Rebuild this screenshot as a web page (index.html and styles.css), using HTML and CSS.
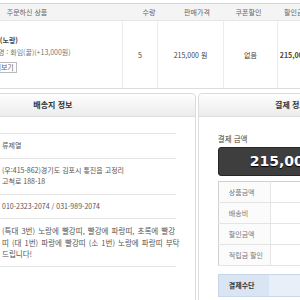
FILE: index.html
```html
<!DOCTYPE html>
<html lang="ko">
<head>
    <meta charset="UTF-8">
    <meta name="viewport" content="width=device-width, initial-scale=1.0">
    <title>주문 확인</title>
    <link rel="stylesheet" href="styles.css">
</head>
<body>
    <div class="page">
        <div class="order-table">
            <div class="order-head">
                <span></span>
                <span>주문하신 상품</span>
                <span>수량</span>
                <span>판매가격</span>
                <span>쿠폰할인</span>
                <span>할인금액</span>
                <span></span>
            </div>
            <div class="order-row">
                <div class="cell product">
                    <p class="prod-name">사탕 (노랑)</p>
                    <p class="prod-opt">옵션명 : 화임(꿀)(+13,000원)</p>
                    <button class="btn-small">상세보기</button>
                </div>
                <div class="cell">5</div>
                <div class="cell">215,000 원</div>
                <div class="cell">없음</div>
                <div class="cell strong">215,000 원</div>
                <div class="cell"></div>
            </div>
        </div>

        <div class="panels">
            <!-- 배송지 정보 -->
            <section class="panel ship">
                <h2 class="panel-title">배송지 정보</h2>
                <div class="panel-body">
                    <table class="info">
                        <tr><th>받는분</th><td>류제열</td></tr>
                        <tr><th>주소</th><td>(우:415-862)경기도 김포시 통진읍 고정리<br>고척로 188-18</td></tr>
                        <tr><th>연락처</th><td>010-2323-2074 / 031-989-2074</td></tr>
                        <tr><th>요청사항</th><td class="memo">(특대 3번) 노랑에 빨강띠, 빨강에 파랑띠, 초록에 빨강<br>띠 (대 1번) 파랑에 빨강띠 (소 1번) 노랑에 파랑띠 부탁<br>드립니다!</td></tr>
                    </table>
                </div>
            </section>

            <!-- 결제 정보 -->
            <section class="panel pay">
                <h2 class="panel-title">결제 정보</h2>
                <div class="panel-body">
                    <p class="pay-label">결제 금액</p>
                    <div class="pay-total">215,000원</div>
                    <table class="pay-table">
                        <tr><th>상품금액</th><td></td></tr>
                        <tr><th>배송비</th><td></td></tr>
                        <tr><th>할인금액</th><td></td></tr>
                        <tr><th>적립금 할인</th><td></td></tr>
                    </table>
                    <div class="pay-method">
                        <span class="pay-method-label">결제수단</span>
                        <span class="pay-method-value"></span>
                    </div>
                </div>
            </section>
        </div>
    </div>
</body>
</html>
```

FILE: styles.css
```css
body {
    margin: 0;
    overflow: hidden;
    font-family: "Noto Sans CJK KR", sans-serif;
    font-size: 7px;
    color: #555;
    background-color: #fff;
}

.page {
    width: 474px;
    margin-left: -90px;
    padding-top: 3px;
}

/* 주문 상품 표 */
.order-table {
    border-top: 1px solid #d6d6d6;
    border-bottom: 1px solid #dcdcdc;
}

.order-head {
    display: grid;
    grid-template-columns: 18px 198px 46px 50px 53px 44px 1fr;
    height: 16px;
    line-height: 16px;
    text-align: center;
    color: #666;
    background-color: #f4f4f4;
    border-bottom: 1px solid #e6e6e6;
}

.order-row {
    display: grid;
    grid-template-columns: 212px 35px 66px 54px 40px 1fr;
    height: 67px;
}

.order-row .cell {
    display: flex;
    align-items: center;
    justify-content: center;
    border-left: 1px solid #ececec;
    color: #444;
}

.order-row .cell.product {
    border-left: none;
    flex-direction: column;
    align-items: flex-start;
    justify-content: flex-start;
    padding: 13px 0 0 75px;
}

.strong {
    font-weight: bold;
}

.prod-name,
.prod-opt {
    margin: 0;
    line-height: 12px;
}

.prod-name {
    font-weight: bold;
    color: #444;
}

.prod-opt {
    color: #777;
}

.btn-small {
    margin-top: 4px;
    height: 11px;
    padding: 0 2px;
    font-family: inherit;
    font-size: 7px;
    line-height: 9px;
    color: #666;
    background: #fff;
    border: 1px solid #bbb;
}

/* 하단 패널 */
.panels {
    display: flex;
    gap: 2px;
    margin-top: 4px;
}

.panel {
    display: flex;
    flex-direction: column;
    border: 1px solid #dcdcdc;
    border-radius: 4px 4px 0 0;
}

.panel.ship {
    width: 285px;
}

.panel.pay {
    width: 185px;
}

.panel-title {
    margin: 0;
    height: 22px;
    line-height: 22px;
    text-align: center;
    font-size: 8px;
    color: #333;
    background: linear-gradient(#fefefe, #ececec);
    border-bottom: 1px solid #dedede;
    border-radius: 4px 4px 0 0;
}

.panel-body {
    flex: 1;
    padding: 16px 19px 9px;
}

.info {
    width: 100%;
    table-layout: fixed;
    border-collapse: collapse;
    border-top: 1px solid #e4e4e4;
}

.info th {
    width: 69px;
    font-weight: normal;
    text-align: left;
}

.info td {
    padding: 6px 0 6px 1px;
    line-height: 11.5px;
    color: #555;
    border-bottom: 1px solid #e4e4e4;
}

.info td.memo {
    font-size: 7.5px;
    word-spacing: 1px;
    white-space: nowrap;
}

.info tr {
    border-bottom: 1px solid #e4e4e4;
}

/* 결제 정보 */
.pay-label {
    margin: 0;
    line-height: 11px;
    font-size: 7.5px;
    color: #444;
}

.pay-total {
    margin-top: 3px;
    height: 27px;
    line-height: 27px;
    padding-left: 31px;
    font-family: "DejaVu Sans", sans-serif;
    font-size: 14px;
    font-weight: bold;
    color: #fff;
    white-space: nowrap;
    background-color: #3e3e3e;
    border: 1px solid #262626;
    border-radius: 3px;
    text-shadow: 0 1px 1px #000;
}

.pay-table {
    width: 100%;
    margin-top: 5px;
    border-collapse: collapse;
    border: 1px solid #d0d0d0;
    border-bottom-color: #aaa;
}

.pay-table th {
    width: 40px;
    height: 18px;
    padding-left: 10px;
    text-align: left;
    font-weight: normal;
    color: #777;
    background-color: #fbfbfb;
    border-bottom: 1px solid #e4e4e4;
}

.pay-table td {
    border-left: 1px solid #e4e4e4;
    border-bottom: 1px solid #e4e4e4;
}

.pay-method {
    display: flex;
    height: 21px;
    margin-top: 8px;
    line-height: 21px;
    background-color: #e8eff8;
    border: 1px solid #c8d6e8;
}

.pay-method-label {
    width: 40px;
    padding-left: 10px;
    font-weight: bold;
    color: #333;
    background-color: #d9e5f3;
}
```
